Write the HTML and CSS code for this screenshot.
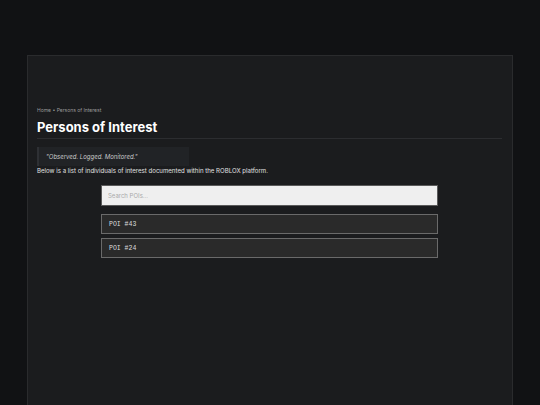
FILE: index.html
```html
<!DOCTYPE html>
<html lang="en">
<head>
<meta charset="utf-8">
<title>Persons of Interest</title>
<link rel="stylesheet" href="styles.css">
</head>
<body>
<main class="page">
  <nav class="crumbs">Home • Persons of Interest</nav>
  <h1 class="title">Persons of Interest</h1>
  <blockquote class="quote">"Observed. Logged. Monitored."</blockquote>
  <p class="intro">Below is a list of individuals of interest documented within the ROBLOX platform.</p>
  <div class="list">
    <input class="search" type="text" placeholder="Search POIs...">
    <div class="poi">POI #43</div>
    <div class="poi">POI #24</div>
  </div>
</main>
</body>
</html>
```
FILE: styles.css
```css
html, body {
  margin: 0;
  height: 100%;
}
body {
  background: #111214;
  font-family: Inter, "Noto Sans", sans-serif;
  color: #e6e6e6;
  padding: 55px 27px 0;
  box-sizing: border-box;
}
.page {
  background: #1b1c1e;
  border: 1px solid #2a2b2d;
  border-bottom: none;
  min-height: 100%;
  box-sizing: border-box;
  padding: 50px 10px 20px 9px;
}
.crumbs {
  font-size: 5px;
  color: #9a9a9a;
  line-height: 8px;
}
.title {
  margin: 4px 0 0;
  font-size: 13px;
  font-weight: 700;
  color: #ffffff;
  line-height: 18px;
  padding-bottom: 2px;
  border-bottom: 1px solid #2c2d30;
}
.quote {
  margin: 8px 0 0;
  width: 152px;
  box-sizing: border-box;
  background: #212326;
  border-left: 2px solid #2e3034;
  padding: 6px 7px;
  font-size: 6px;
  font-style: italic;
  color: #c8c8c8;
  line-height: 7px;
}
.intro {
  margin: 0;
  font-size: 6.1px;
  line-height: 9px;
  color: #e0e0e0;
}
.list {
  width: 337px;
  margin: 10px auto 0;
  display: flex;
  flex-direction: column;
  gap: 4px;
}
.search {
  box-sizing: border-box;
  height: 21px;
  margin-bottom: 4px;
  background: #efefef;
  border: 1px solid #5a5a5a;
  padding: 0 6px;
  font-family: Inter, "Noto Sans", sans-serif;
  font-size: 6px;
  color: #222;
  outline: none;
}
.search::placeholder {
  color: #aaaaaa;
}
.poi {
  box-sizing: border-box;
  height: 20px;
  display: flex;
  align-items: center;
  padding: 0 7px;
  background: #2a2a2a;
  border: 1px solid #6a6a6a;
  font-family: "Liberation Mono", monospace;
  font-size: 6.5px;
  color: #dcdcdc;
}
```
